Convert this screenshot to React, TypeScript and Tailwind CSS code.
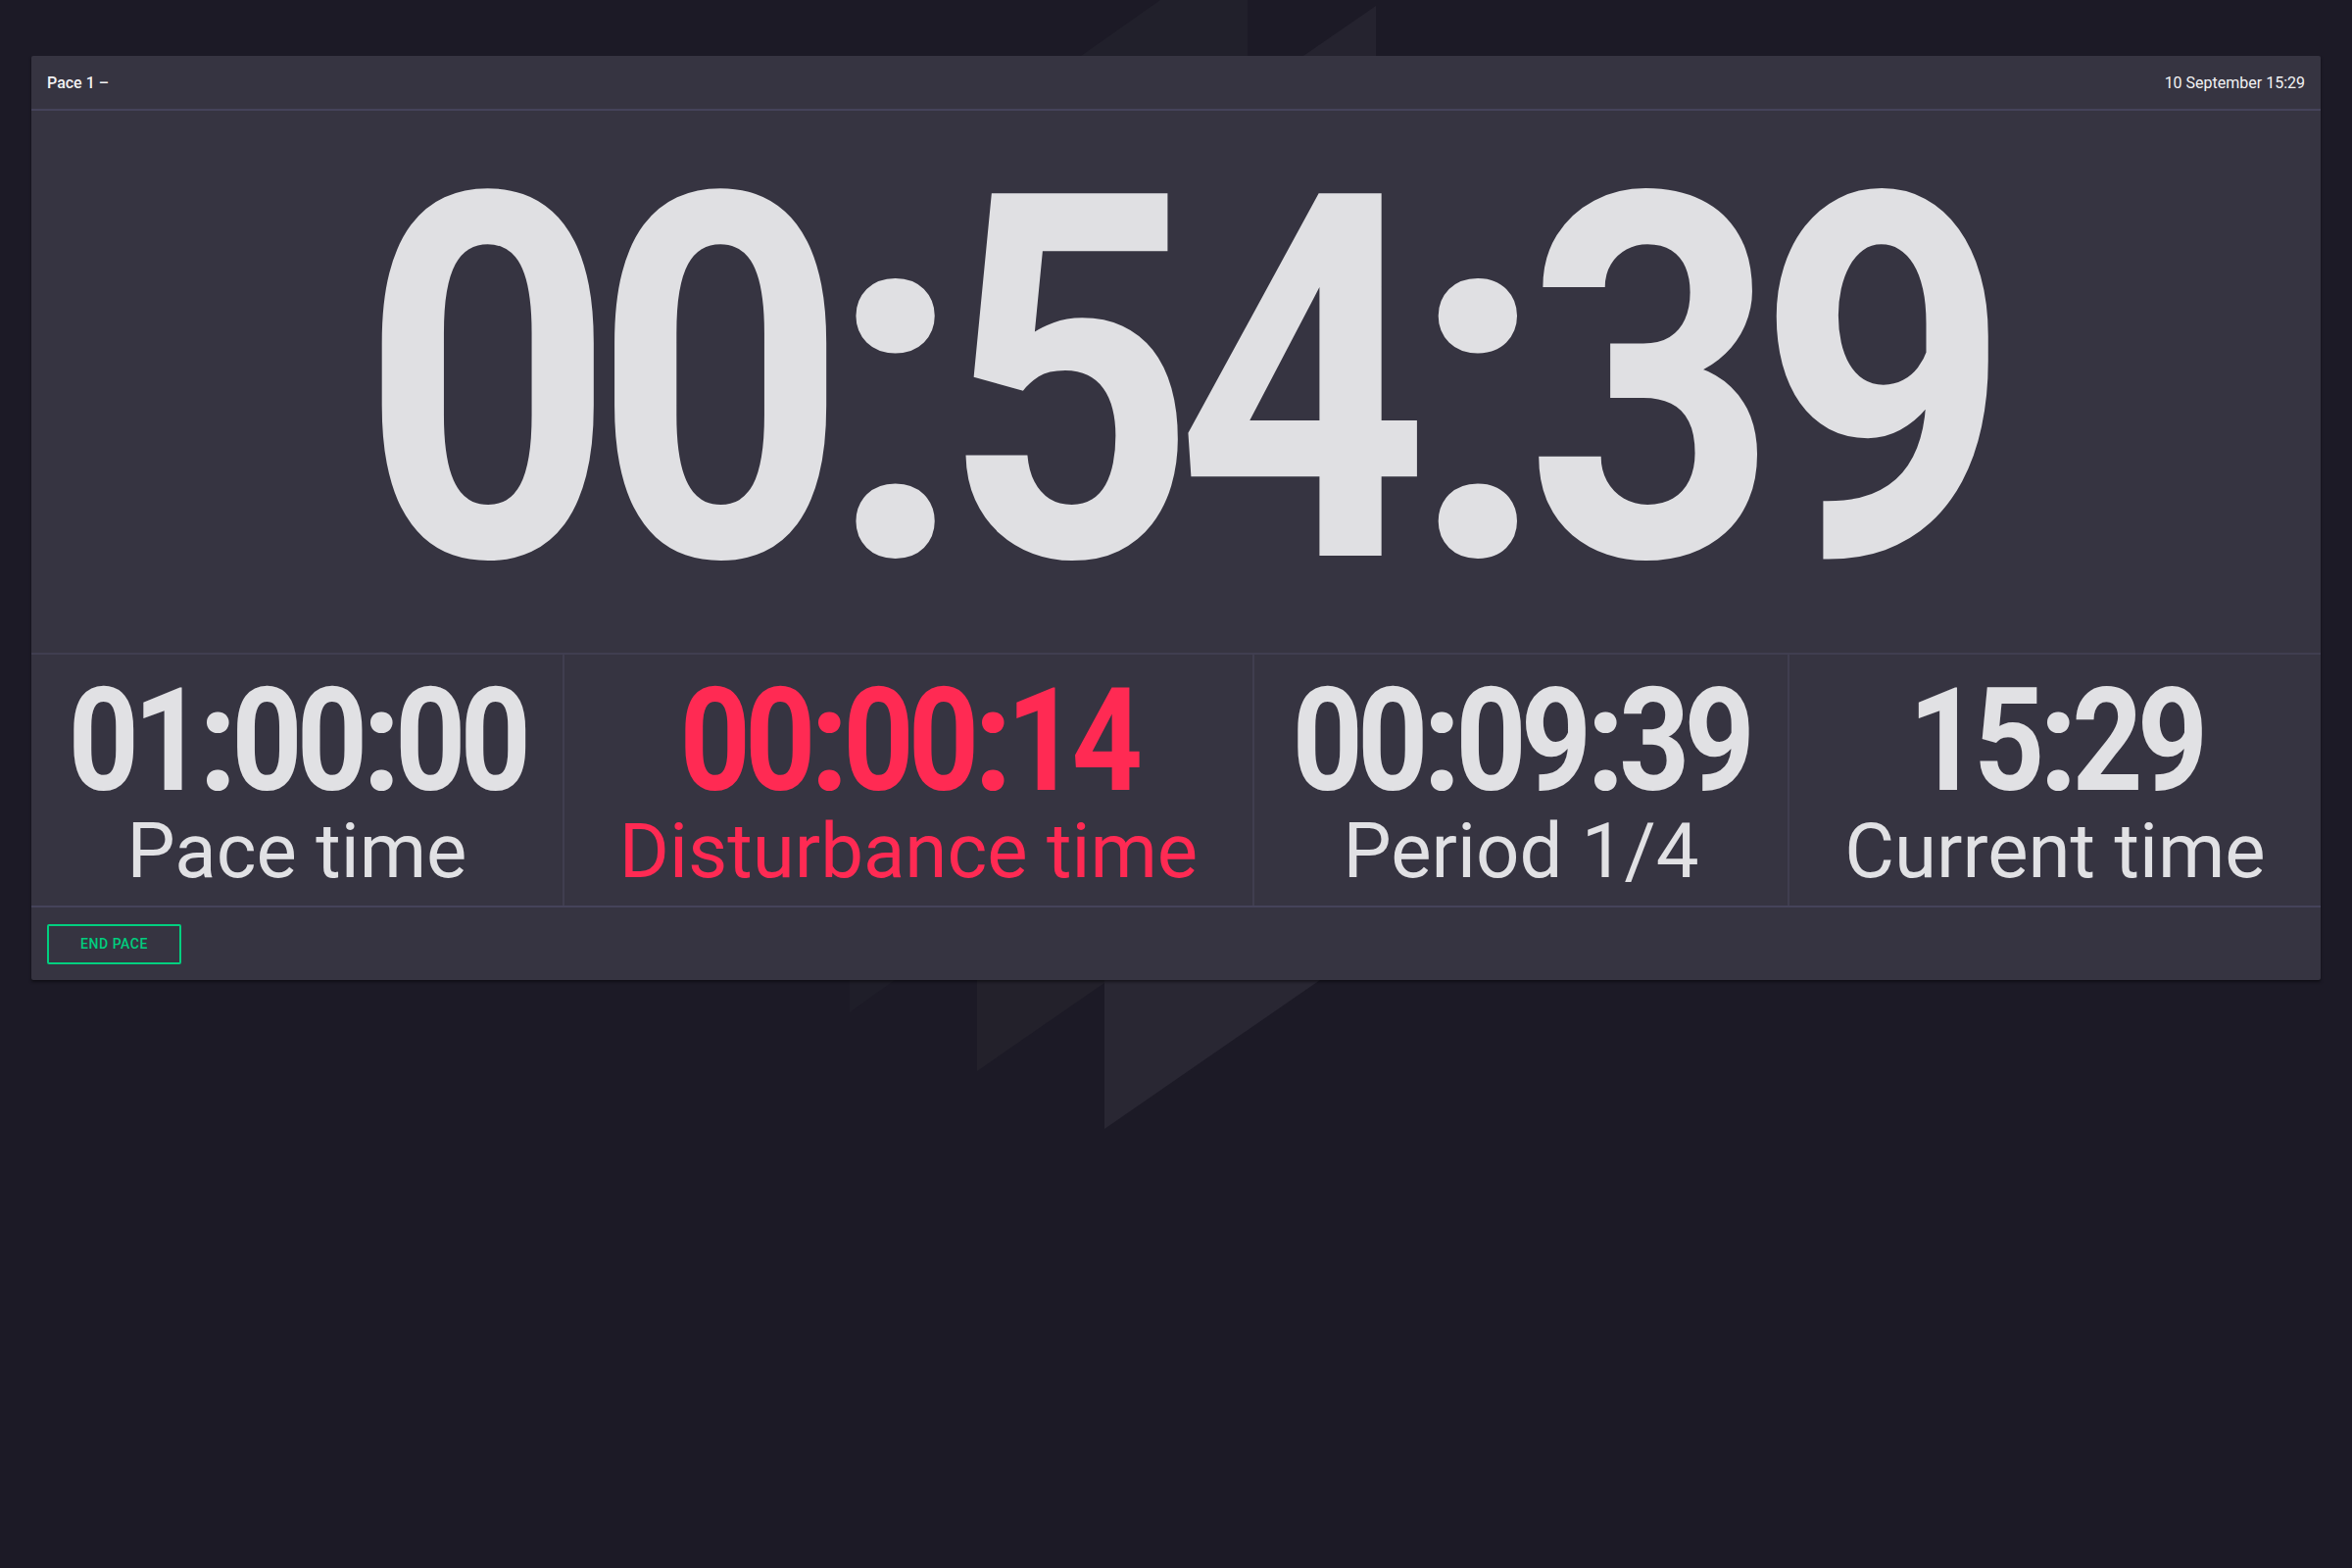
import React from "react";

function Clock({ value }: { value: string }) {
  const parts = value.split(":");
  return (
    <span className="inline-block origin-center scale-x-[0.865] font-bold tracking-[-0.046em] whitespace-nowrap">
      {parts.map((p, i) => (
        <React.Fragment key={i}>
          {i > 0 && (
            <span className="mx-[0.0145em] inline-block origin-center scale-x-[1.12]">:</span>
          )}
          {p}
        </React.Fragment>
      ))}
    </span>
  );
}

function Stat({
  value,
  label,
  red,
  last,
}: {
  value: string;
  label: string;
  red?: boolean;
  last?: boolean;
}) {
  const color = red ? "text-[#ff2a53]" : "text-[#e1e1e4]";
  return (
    <div
      className={`flex flex-col items-center justify-center ${
        last ? "" : "border-r-2 border-[#403e4f]"
      }`}
    >
      <div className={`h-[146px] text-[146px] leading-none ${color}`}>
        <Clock value={value} />
      </div>
      <div className={`text-[78px] leading-none font-normal whitespace-nowrap ${color}`}>
        {label}
      </div>
    </div>
  );
}

export default function App() {
  return (
    <div className="relative min-h-[1600px] w-[2400px] overflow-hidden bg-[#1c1a26] font-['Roboto','Noto_Sans',sans-serif]">
      <svg
        className="absolute left-0 top-0"
        width="2400"
        height="1600"
        viewBox="0 0 2400 1600"
      >
        <polygon points="1184,0 1273,0 1273,57 1103,57" fill="#21202b" />
        <polygon points="1404,6 1404,57 1330,57" fill="#25232f" />
        <polygon points="867,1000 913,1000 867,1033" fill="#1f1e29" />
        <polygon points="997,1000 1127,1000 1127,1003 997,1093" fill="#23212b" />
        <polygon points="1127,1000 1347,1000 1127,1152" fill="#292733" />
      </svg>

      <div className="relative px-[32px] pt-[57px]">
        <div className="w-[2336px] rounded-[2px] bg-[#363441] shadow-[0_2px_3px_rgba(0,0,0,0.45)]">
          {/* header */}
          <div className="flex h-[56px] items-center justify-between border-b-2 border-[#45435a] px-4 pt-[2px] text-[16px] text-[#f2f2f4]">
            <span className="font-medium">Pace 1 –</span>
            <span className="font-normal">10 September 15:29</span>
          </div>

          {/* main clock */}
          <div className="flex h-[555px] items-center justify-center border-b-2 border-[#403e50]">
            <div className="text-[520px] leading-none text-[#e0e0e3]">
              <Clock value="00:54:39" />
            </div>
          </div>

          {/* stats */}
          <div className="grid h-[258px] grid-cols-[544px_704px_546px_1fr] border-b-2 border-[#45435a]">
            <Stat value="01:00:00" label="Pace time" />
            <Stat value="00:00:14" label="Disturbance time" red />
            <Stat value="00:09:39" label="Period 1/4" />
            <Stat value="15:29" label="Current time" last />
          </div>

          {/* footer */}
          <div className="flex h-[74px] items-center px-4">
            <button className="flex h-[41px] w-[137px] items-center justify-center rounded-[2px] border-2 border-[#00cf7f] text-[14px] font-medium tracking-[0.04em] text-[#00cf7f]">
              END PACE
            </button>
          </div>
        </div>
      </div>
    </div>
  );
}
